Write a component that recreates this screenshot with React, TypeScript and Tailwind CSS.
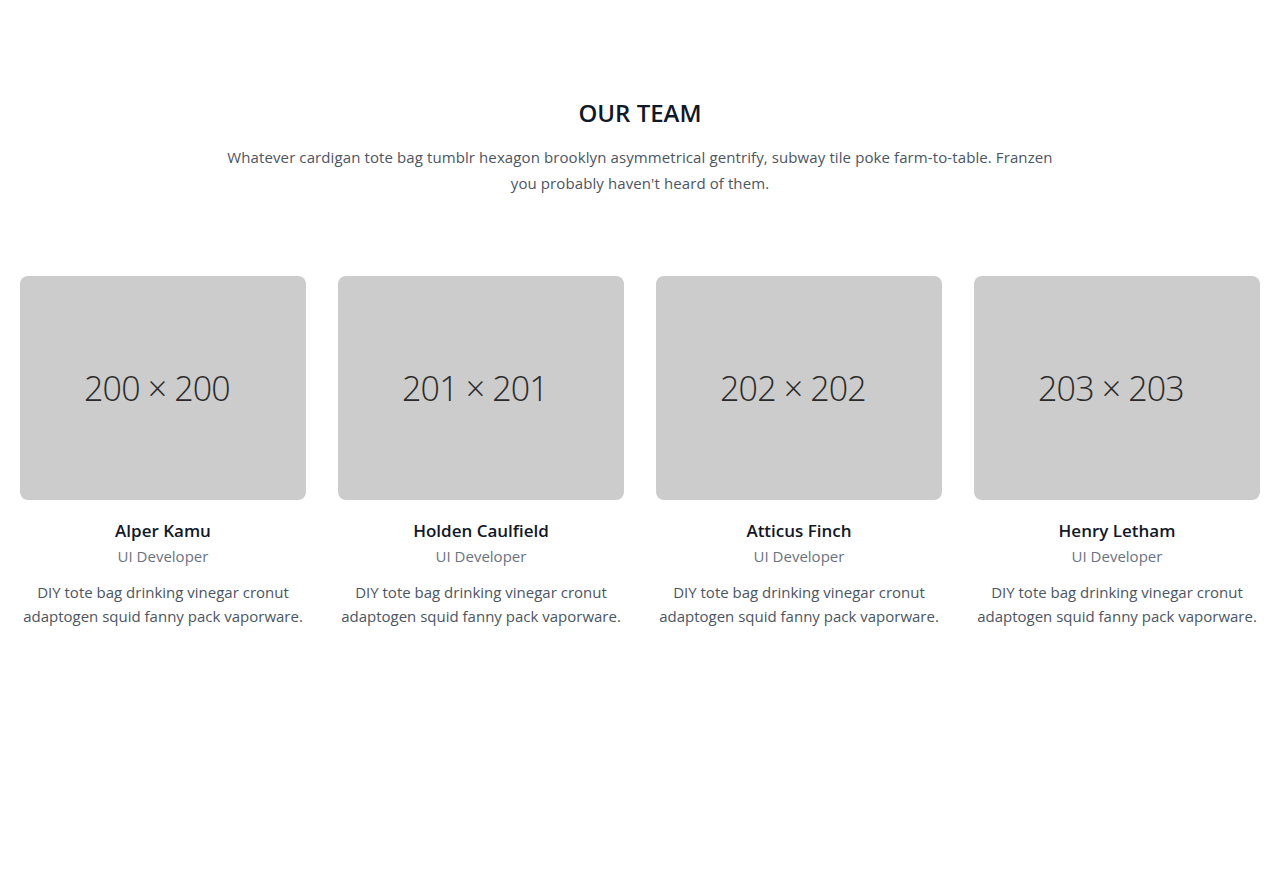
const team = [
  { name: "Alper Kamu", size: "200 × 200" },
  { name: "Holden Caulfield", size: "201 × 201" },
  { name: "Atticus Finch", size: "202 × 202" },
  { name: "Henry Letham", size: "203 × 203" },
];

export default function App() {
  return (
    <div className="min-h-screen bg-white font-['Open_Sans',sans-serif]">
      <section className="px-5 pt-[97px]">
        <div className="text-center mb-20">
          <h1 className="text-2xl font-semibold text-[#111827] mb-[15px]">OUR TEAM</h1>
          <p className="max-w-[840px] mx-auto text-[15px] tracking-[0.1px] leading-[26px] text-[#4b5563]">
            Whatever cardigan tote bag tumblr hexagon brooklyn asymmetrical gentrify, subway tile poke farm-to-table. Franzen you probably haven't heard of them.
          </p>
        </div>
        <div className="grid grid-cols-4 gap-8">
          {team.map((m) => (
            <div key={m.name} className="text-center">
              <div className="h-[224px] rounded-lg bg-[#cccccc] flex items-center justify-center pr-3">
                <span className="text-[34px] font-light text-[#2a2a2a] tracking-tight">{m.size}</span>
              </div>
              <h2 className="mt-4 text-[17px] leading-7 font-semibold text-[#111827] translate-y-[1px]">{m.name}</h2>
              <p className="text-[15px] leading-6 text-[#6b7280]">UI Developer</p>
              <p className="mt-3 text-[15px] leading-6 text-[#4b5563]">
                DIY tote bag drinking vinegar cronut adaptogen squid fanny pack vaporware.
              </p>
            </div>
          ))}
        </div>
      </section>
    </div>
  );
}
